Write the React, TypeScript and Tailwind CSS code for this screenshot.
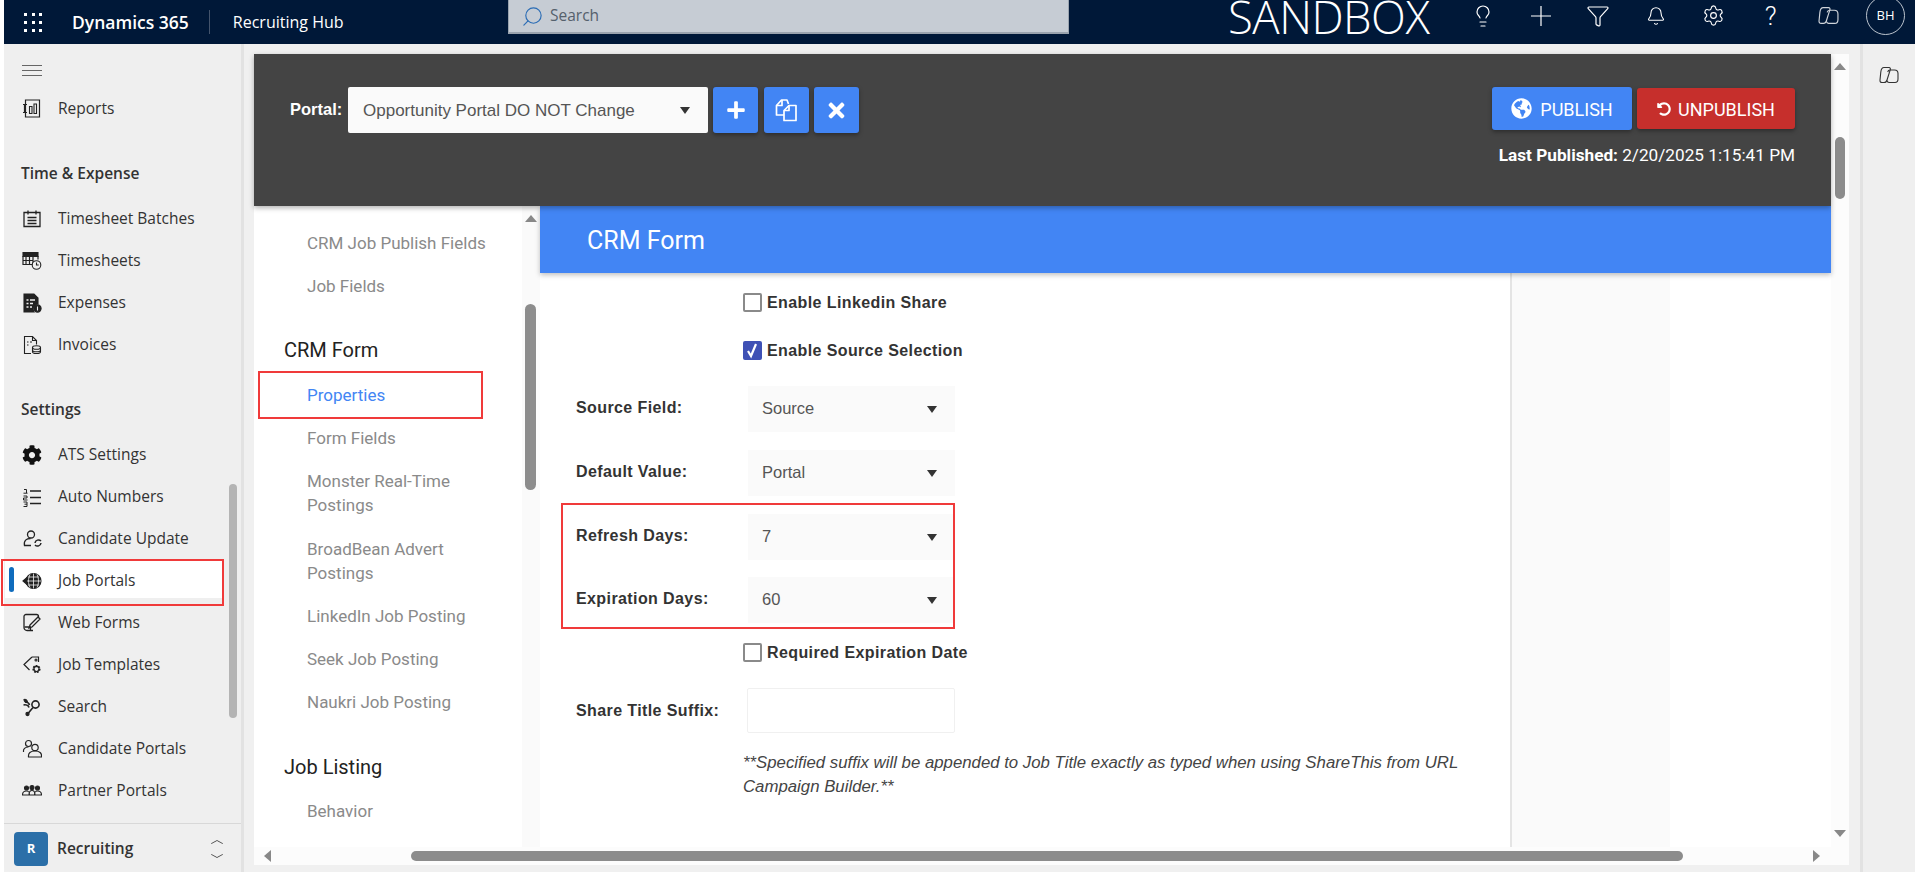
import { Bell, Filter, Lightbulb, Search, Settings, ChevronUp, ChevronDown } from 'lucide-react'
import { FaCog, FaGlobeAmericas, FaPlus, FaTimes, FaUndoAlt } from 'react-icons/fa'
import type { ReactNode } from 'react'

const navFont = "font-['Open_Sans','Noto_Sans',sans-serif]"
const roboto = "font-['Roboto',sans-serif]"
const arial = "font-['Liberation_Sans',Arial,sans-serif]"

const Ico = ({ children }: { children: ReactNode }) => (
    <svg viewBox="0 0 20 20" className="w-5 h-5 shrink-0 text-[#222]" fill="none" stroke="currentColor" strokeWidth="1.1">
        {children}
    </svg>
)

const sideIcons: Record<string, ReactNode> = {
    reports: (
        <Ico>
            <path d="M3.500 1h14v17h-14zM1 5.500h4M1 13.500h4M2.500 5.500v8" strokeWidth="1.200" />
            <path d="M7.500 7.500h2.500v7H7.500zM12 5h2.500v9.500H12z" />
        </Ico>
    ),
    batches: (
        <Ico>
            <path d="M2 3.500h16v14H2zM6 1.500v4M14 1.500v4M5.500 8.500h9M5.500 11.500h9M5.500 14.500h9" strokeWidth="1.300" />
        </Ico>
    ),
    timesheets: (
        <Ico>
            <path d="M1 1.500h15v4H1z" fill="currentColor" />
            <path d="M1 5.500h10v8H1zM4 5.500v8M7.500 5.500v8M1 9.500h10M11 5.500h5v3" strokeWidth="1.200" />
            <circle cx="14.500" cy="14" r="4.300" fill="#f0f0f0" />
            <path d="M14.500 11.500V14h2.200" />
        </Ico>
    ),
    expenses: (
        <Ico>
            <path d="M2 1h10l4 4v6a5 5 0 0 0-4 8H2z" fill="currentColor" />
            <path d="M4.500 7h2M8 7h5M4.500 10.500h2M8 10.500h3M4.500 14h2M8 14h2" stroke="#f0f0f0" strokeWidth="1.300" />
            <circle cx="15.500" cy="15.500" r="3.600" fill="currentColor" />
            <path d="M15.500 13.500v4" stroke="#f0f0f0" />
        </Ico>
    ),
    invoices: (
        <Ico>
            <path d="M9 18.500H2.500v-17h8l4 4v4M10.500 1.500v4h4M5 7h1.500M8 7h2M5 10h1.500" />
            <ellipse cx="14.500" cy="12.500" rx="4" ry="1.800" />
            <path d="M10.500 12.500v4.200c0 1 1.800 1.800 4 1.800s4-.8 4-1.800v-4.200M10.500 15c0 1 1.800 1.800 4 1.800s4-.8 4-1.800" />
        </Ico>
    ),
    candidate: (
        <Ico>
            <circle cx="9" cy="5.500" r="3.500" strokeWidth="1.300" />
            <path d="M9 16.500H2.500c-1-5 2-7 6-7" strokeWidth="1.300" />
            <path d="M13 14a3.500 3.500 0 0 1 6-2M19 14a3.500 3.500 0 0 1-6 2" strokeWidth="1.500" />
        </Ico>
    ),
    portals: (
        <Ico>
            <circle cx="11.500" cy="10" r="7.500" fill="currentColor" />
            <path d="M4 10h15M11.500 2.500v15M6 6h11M6 14h11M8 3.500c-2 4-2 9 0 13M15 3.500c2 4 2 9 0 13" stroke="#f0f0f0" strokeWidth="0.800" />
            <path d="M1 10l3.500-3v6z" fill="currentColor" />
        </Ico>
    ),
    forms: (
        <Ico>
            <path d="M11 17.500H5a3 3 0 0 1-3-3v-11a2 2 0 0 1 2-2h10.500a2 2 0 0 1 2 2V5" strokeWidth="1.300" />
            <path d="M2.500 14h6v3.500M8 12l8-8 2 2-8 8-3 1z" strokeWidth="1.300" />
        </Ico>
    ),
    templates: (
        <Ico>
            <path d="M10 2l-8 7.500 5.500 5.500M10 2h6.500v5" strokeWidth="1.200" />
            <circle cx="14" cy="5" r="1" />
            <circle cx="14.500" cy="14" r="3" strokeWidth="2.200" strokeDasharray="1.600 1" />
            <circle cx="14.500" cy="14" r="2.600" />
        </Ico>
    ),
    search: (
        <Ico>
            <circle cx="13.500" cy="7.500" r="3.600" strokeWidth="1.600" />
            <path d="M11 10.500l-5 6M3 5c2 0 4 1 4.500 3M1.500 8c2.500-.5 5 .5 5.500 2.500" strokeWidth="1.600" />
            <path d="M2 2.500c1.500-.5 3 0 3.500 2.500-2 .5-3.500-.5-3.500-2.500z" fill="currentColor" />
            <circle cx="5.500" cy="17" r="1.600" fill="currentColor" />
        </Ico>
    ),
    candPortals: (
        <Ico>
            <circle cx="6.500" cy="4.500" r="3" strokeWidth="1.200" />
            <path d="M1.500 13c-.5-3 1.500-5 5-5" strokeWidth="1.200" />
            <circle cx="13" cy="8.500" r="3.200" strokeWidth="1.200" />
            <path d="M6.500 18c-.5-4 2-6 6.500-6s7 2 6.500 6z" strokeWidth="1.200" />
        </Ico>
    ),
    partner: (
        <Ico>
            <circle cx="4.500" cy="7" r="2" fill="currentColor" />
            <circle cx="10" cy="6.500" r="2" fill="currentColor" />
            <circle cx="15.500" cy="7" r="2" fill="currentColor" />
            <path d="M.5 14c0-3 1.500-4 4-4s3 .8 3 4zM7 14c0-3 .8-4.500 3-4.500s3 1.500 3 4.500zM12.500 14c0-3 .5-4 3-4s4 1 4 4z" />
        </Ico>
    ),
}

const ListNumbers = () => (
    <Ico>
        <path d="M8 4h11M8 10.500h11M8 16.500h11" strokeWidth="1.300" />
        <path d="M2 2.500h2.500v3.500M1.500 6.200h4M1.500 9h3.500v2h-3.500v2h4M1.500 15h3.500v4.500h-3.500M2.500 17.200h2.500" strokeWidth="1" />
    </Ico>
)

type SideItem = { label: string; icon: ReactNode; active?: boolean }

const timeItems: SideItem[] = [
    { label: 'Timesheet Batches', icon: sideIcons.batches },
    { label: 'Timesheets', icon: sideIcons.timesheets },
    { label: 'Expenses', icon: sideIcons.expenses },
    { label: 'Invoices', icon: sideIcons.invoices },
]

const settingItems: SideItem[] = [
    { label: 'ATS Settings', icon: <FaCog className="w-5 h-5 shrink-0 text-[#111]" /> },
    { label: 'Auto Numbers', icon: <ListNumbers /> },
    { label: 'Candidate Update', icon: sideIcons.candidate },
    { label: 'Job Portals', icon: sideIcons.portals, active: true },
    { label: 'Web Forms', icon: sideIcons.forms },
    { label: 'Job Templates', icon: sideIcons.templates },
    { label: 'Search', icon: sideIcons.search },
    { label: 'Candidate Portals', icon: sideIcons.candPortals },
    { label: 'Partner Portals', icon: sideIcons.partner },
]

const SideRow = ({ item }: { item: SideItem }) => (
    <div className="relative h-[42px] flex items-center">
        {item.active && (
            <>
                <div className="absolute left-px right-[18px] top-[1px] bottom-[4px] bg-white" />
                <div className="absolute left-[5px] top-[7px] w-[5px] h-[25px] rounded bg-[#0f6cbd]" />
            </>
        )}
        <div className="relative flex items-center pl-[18px] gap-[16px] text-[15.500px] text-[#333]">
            {item.icon}
            <span>{item.label}</span>
        </div>
    </div>
)

const SideHeading = ({ children }: { children: ReactNode }) => (
    <div className="h-[68px] pt-[31px] pl-[17px] text-[15.500px] leading-[24px] font-semibold text-[#333]">{children}</div>
)

const Sidebar = () => (
    <aside className={`relative w-[240px] shrink-0 flex flex-col bg-[#efefef] border-r-[3px] border-[#e2e2e2] ${navFont} overflow-hidden rounded-bl-lg`}>
        <div className="flex-1 overflow-hidden">
            <div className="h-[44px] pl-[18px] pt-[21px]">
                <div className="w-[20px] h-[11px] border-y border-[#666] relative">
                    <div className="absolute top-[4px] left-0 right-0 h-px bg-[#666]" />
                </div>
            </div>
            <SideRow item={{ label: 'Reports', icon: sideIcons.reports }} />
            <SideHeading>Time &amp; Expense</SideHeading>
            {timeItems.map(i => <SideRow key={i.label} item={i} />)}
            <SideHeading>Settings</SideHeading>
            {settingItems.map(i => <SideRow key={i.label} item={i} />)}
        </div>
        <div className="h-[49px] shrink-0 border-t border-[#d8d8d8] flex items-center pt-[2px] pl-[10px] pr-[13px] mb-0">
            <div className="w-[34px] h-[34px] rounded bg-[#2b6fa8] flex items-center justify-center text-white text-[13px] font-bold">R</div>
            <span className="ml-[9px] text-[15.500px] font-semibold text-[#333]">Recruiting</span>
            <div className="ml-auto flex flex-col gap-[2px] text-[#444]">
                <ChevronUp className="w-[22px] h-[12px]" strokeWidth={1.100} preserveAspectRatio="none" />
                <ChevronDown className="w-[22px] h-[12px]" strokeWidth={1.100} preserveAspectRatio="none" />
            </div>
        </div>
        {/* sidebar scrollbar */}
        <div className="absolute left-[225px] top-[440px] w-[8px] h-[234px] rounded-full bg-[#b4b4b4]" />
    </aside>
)

const CopilotIcon = ({ className }: { className: string }) => (
    <svg viewBox="0 0 20 20" className={className} fill="none" stroke="currentColor" strokeWidth="1.100" strokeLinejoin="round">
        <path d="M5 2.500h5c1.200 0 1.700 1 1.300 2.200L8 15c-.4 1.500-1.300 2.500-2.800 2.500H3c-1.500 0-2.200-1-2-2.500l.8-8c.3-2.500 1.400-4.500 3.200-4.500z" />
        <path d="M11 5h4.500c2 0 3.500 1.500 3.500 3.500V14c0 2-1.200 3.500-3 3.500h-6c-1 0-1.800-.8-2-1.800" />
        <path d="M11 5c-1.200 0-2 .8-2.300 2" />
    </svg>
)

const HeadCell = ({ children }: { children: ReactNode }) => (
    <div className="w-[57.500px] shrink-0 flex items-center justify-center">{children}</div>
)

const TopBar = () => (
    <header className="h-[44px] shrink-0 bg-[#001838] text-white flex items-center relative overflow-hidden">
        <div className="ml-[20px] grid grid-cols-3 gap-[5px] w-[18px] h-[18px] mt-[-1px]">
            {Array.from({ length: 9 }).map((_, i) => <span key={i} className="w-[3px] h-[3px] bg-white" />)}
        </div>
        <span className={`ml-[30px] text-[17.500px] font-semibold ${navFont}`}>Dynamics 365</span>
        <div className="ml-[20px] w-px h-[24px] bg-[#44546c]" />
        <span className={`ml-[23px] text-[16px] ${navFont}`}>Recruiting Hub</span>
        <div className="absolute left-[504px] top-0 w-[561px] h-[34px] bg-[#c6ccd4] border-b-2 border-x border-[#9aa3ae] flex items-center pl-[12px] gap-[6px] text-[#55606c]">
            <Search className="w-[23px] h-[23px] text-[#2a6cb5] -scale-x-100" strokeWidth={1.200} />
            <span className={`text-[15.500px] ${navFont}`}>Search</span>
        </div>
        <span className={`absolute left-[1224px] top-[-12px] text-[45.500px] leading-[56px] font-light tracking-[-0.5px] ${navFont}`}>SANDBOX</span>
        <div className="ml-auto self-start h-[31px] flex items-center mr-[10px]">
            <HeadCell><Lightbulb className="w-[24px] h-[24px]" strokeWidth={1.200} /></HeadCell>
            <HeadCell>
                <svg viewBox="0 0 20 20" className="w-[20px] h-[20px]" stroke="currentColor" strokeWidth="1.200"><path d="M0 10h20M10 0v20" /></svg>
            </HeadCell>
            <HeadCell><Filter className="w-[24px] h-[24px]" strokeWidth={1.200} /></HeadCell>
            <HeadCell><Bell className="w-[20px] h-[20px]" strokeWidth={1.300} /></HeadCell>
            <HeadCell><Settings className="w-[23px] h-[23px]" strokeWidth={1.200} /></HeadCell>
            <HeadCell><span className={`text-[26px] font-light leading-none ${roboto}`}>?</span></HeadCell>
            <HeadCell><CopilotIcon className="w-[21px] h-[21px] text-[#cfd4da]" /></HeadCell>
            <div className={`ml-[9px] w-[39px] h-[39px] shrink-0 rounded-full border border-[#bcc4ce] flex items-center justify-center text-[13px] ${navFont}`}>BH</div>
        </div>
    </header>
)

const Arrow = ({ className = '' }: { className?: string }) => (
    <span className={`w-0 h-0 border-x-[5px] border-x-transparent border-t-[7px] border-t-[#333] ${className}`} />
)

const BlueBtn = ({ children }: { children: ReactNode }) => (
    <button className="w-[45px] h-[46px] rounded-[3px] bg-[#4285f4] text-white flex items-center justify-center shadow-[0_2px_4px_rgba(0,0,0,0.35)]">
        {children}
    </button>
)

const DarkBar = () => (
    <div className={`relative z-20 h-[152px] bg-[#444] shrink-0 flex shadow-[0_2px_5px_rgba(0,0,0,0.3)] ${roboto}`}>
        <div className="flex items-start pl-[36px] pt-[33px]">
            <span className={`w-[58px] shrink-0 mt-[12px] text-[16.500px] leading-[20px] font-bold text-white ${arial}`}>Portal:</span>
            <div className={`w-[360px] h-[46px] bg-[#fafafa] rounded-[2px] flex items-center pl-[15px] pr-[18px] text-[17px] text-[#555] ${arial}`}>
                <span className="pt-[1px]">Opportunity Portal DO NOT Change</span>
                <Arrow className="ml-auto" />
            </div>
            <div className="flex gap-[5.500px] ml-[5px]">
                <BlueBtn><FaPlus className="w-[20px] h-[20px]" /></BlueBtn>
                <BlueBtn>
                    <svg viewBox="0 0 24 24" className="w-[24px] h-[24px]" fill="none" stroke="currentColor" strokeWidth="1.700" strokeLinejoin="round">
                        <path d="M10 17H2.500V7.500l5-5.500h5.500l1.500 4" />
                        <path d="M8 2v5.500H2.500" />
                        <path d="M15 7.500h7v15H10V12.500z" />
                        <path d="M15 7.500v5h-5" />
                    </svg>
                </BlueBtn>
                <BlueBtn><FaTimes className="w-[23px] h-[23px]" /></BlueBtn>
            </div>
        </div>
        <div className="ml-auto pr-[36px] pt-[33px] flex flex-col items-end">
            <div className="flex items-center gap-[5px]">
                <button className="w-[140px] h-[43px] rounded-[3px] bg-[#4285f4] text-white text-[18px] flex items-center justify-center gap-[8px] shadow-[0_2px_4px_rgba(0,0,0,0.35)]">
                    <FaGlobeAmericas className="w-[21px] h-[21px]" />
                    <span className="pt-[2px]">PUBLISH</span>
                </button>
                <button className="w-[158px] h-[41px] rounded-[3px] bg-[#c62f2c] text-white text-[18px] flex items-center justify-center gap-[7px] shadow-[0_2px_4px_rgba(0,0,0,0.35)]">
                    <FaUndoAlt className="w-[14px] h-[14px]" />
                    <span className="pt-[2px]">UNPUBLISH</span>
                </button>
            </div>
            <div className="mt-[15px] text-[17.200px] leading-[20px] text-white">
                <span className="font-bold">Last Published:</span> 2/20/2025 1:15:41 PM
            </div>
        </div>
    </div>
)

type NavEntry = { kind: 'item' | 'head'; lines: string[]; active?: boolean }

const portalNav: NavEntry[] = [
    { kind: 'item', lines: ['CRM Job Publish Fields'] },
    { kind: 'item', lines: ['Job Fields'] },
    { kind: 'head', lines: ['CRM Form'] },
    { kind: 'item', lines: ['Properties'], active: true },
    { kind: 'item', lines: ['Form Fields'] },
    { kind: 'item', lines: ['Monster Real-Time', 'Postings'] },
    { kind: 'item', lines: ['BroadBean Advert', 'Postings'] },
    { kind: 'item', lines: ['LinkedIn Job Posting'] },
    { kind: 'item', lines: ['Seek Job Posting'] },
    { kind: 'item', lines: ['Naukri Job Posting'] },
    { kind: 'head', lines: ['Job Listing'] },
    { kind: 'item', lines: ['Behavior'] },
]

const PortalNav = () => (
    <div className={`relative w-[286px] shrink-0 h-full overflow-hidden bg-white ${roboto}`}>
        <div className="pt-[15px] pl-[53px] pr-[40px]">
            {portalNav.map(e =>
                e.kind === 'head' ? (
                    <div key={e.lines[0]} className="h-[66px] pt-[31px] -ml-[23px] text-[20px] leading-[24px] text-[#222]">{e.lines[0]}</div>
                ) : (
                    <div key={e.lines[0]} className={`py-[9.600px] text-[17px] leading-[24px] ${e.active ? 'text-[#4285f4]' : 'text-[#8a8a8a]'}`}>
                        {e.lines.map(l => <div key={l} className="whitespace-nowrap">{l}</div>)}
                    </div>
                )
            )}
        </div>
        {/* nav scroll track */}
        <div className="absolute right-0 top-0 bottom-0 w-[18px] bg-[#fafafa]">
            <span className="absolute left-[3px] top-[9px] w-0 h-0 border-x-[6px] border-x-transparent border-b-[7px] border-b-[#888]" />
            <div className="absolute left-[3px] top-[98px] w-[11px] h-[186px] rounded-full bg-[#8c8c8c]" />
        </div>
    </div>
)

const Check = ({ label, checked }: { label: string; checked?: boolean }) => (
    <div className="flex items-center ml-[203px] h-[19px]">
        {checked ? (
            <span className="w-[19px] h-[19px] rounded-[2px] bg-[#3f51b5] flex items-center justify-center">
                <svg viewBox="0 0 19 19" className="w-[19px] h-[19px]" fill="none" stroke="white" strokeWidth="2.200"><path d="M5 10l3 5 5-12" /></svg>
            </span>
        ) : (
            <span className="w-[19px] h-[19px] rounded-[2px] border-2 border-[#8a8a8a] bg-white" />
        )}
        <span className="ml-[5px] text-[16px] font-bold text-[#333] tracking-[0.4px]">{label}</span>
    </div>
)

const SelectRow = ({ label, value, className = '' }: { label: string; value: string; className?: string }) => (
    <div className={`flex items-center h-[46px] pl-[36px] ${className}`}>
        <span className="w-[172px] shrink-0 pb-[2px] text-[16px] font-bold text-[#333] tracking-[0.4px]">{label}</span>
        <div className="w-[207px] h-full bg-[#fafafa] flex items-center pl-[14px] pr-[18px] text-[16.500px] text-[#555]">
            <span className="pb-[2px]">{value}</span>
            <Arrow className="ml-auto" />
        </div>
    </div>
)

const FormBody = () => (
    <div className={`flex flex-1 min-h-0 ${arial}`}>
        <div className="w-[972px] shrink-0 border-r-2 border-[#e4e4e4] bg-white pt-[20px] overflow-hidden">
            <Check label="Enable Linkedin Share" />
            <div className="mt-[29px]"><Check label="Enable Source Selection" checked /></div>
            <SelectRow className="mt-[26px]" label="Source Field:" value="Source" />
            <SelectRow className="mt-[18px]" label="Default Value:" value="Portal" />
            <SelectRow className="mt-[18px]" label="Refresh Days:" value="7" />
            <SelectRow className="mt-[17px]" label="Expiration Days:" value="60" />
            <div className="mt-[20px]"><Check label="Required Expiration Date" /></div>
            <div className="mt-[26px] flex items-center h-[45px] pl-[36px]">
                <span className="w-[171px] shrink-0 text-[16px] font-bold text-[#333] tracking-[0.4px]">Share Title Suffix:</span>
                <div className="w-[208px] h-full border border-[#f0f0f0] rounded-[2px] bg-white" />
            </div>
            <p className="mt-[18px] ml-[203px] w-[760px] text-[16.800px] leading-[24px] italic text-[#444]">
                **Specified suffix will be appended to Job Title exactly as typed when using ShareThis from URL<br />Campaign Builder.**
            </p>
        </div>
        <div className="w-[158px] shrink-0 bg-[#fafafa]" />
        <div className="flex-1 bg-white" />
    </div>
)

const MainCard = () => (
    <div className="w-[1595px] h-[811px] flex flex-col bg-white">
        <div className="flex flex-1 min-h-0">
            <div className="w-[1577px] flex flex-col">
                <DarkBar />
                <div className="flex flex-1 min-h-0">
                    <PortalNav />
                    <div className="flex-1 flex flex-col min-w-0">
                        <div className={`relative z-10 h-[67px] shrink-0 bg-[#4285f4] text-white text-[25px] pl-[47px] pt-[2px] flex items-center shadow-[0_2px_5px_rgba(0,0,0,0.25)] ${roboto}`}>
                            CRM Form
                        </div>
                        <FormBody />
                    </div>
                </div>
            </div>
            {/* page vertical scrollbar */}
            <div className="relative w-[18px] bg-[#fcfcfc]">
                <span className="absolute left-[3px] top-[9px] w-0 h-0 border-x-[6px] border-x-transparent border-b-[7px] border-b-[#888]" />
                <div className="absolute left-[4px] top-[83px] w-[10px] h-[62px] rounded-full bg-[#8c8c8c]" />
                <span className="absolute left-[3px] bottom-[10px] w-0 h-0 border-x-[6px] border-x-transparent border-t-[7px] border-t-[#888]" />
            </div>
        </div>
        {/* page horizontal scrollbar */}
        <div className="relative h-[18px] shrink-0 bg-[#fcfcfc]">
            <span className="absolute left-[10px] top-[3px] w-0 h-0 border-y-[6px] border-y-transparent border-r-[7px] border-r-[#888]" />
            <div className="absolute left-[157px] top-[4px] w-[1272px] h-[10px] rounded-full bg-[#8c8c8c]" />
            <span className="absolute left-[1559px] top-[3px] w-0 h-0 border-y-[6px] border-y-transparent border-l-[7px] border-l-[#888]" />
        </div>
    </div>
)

const Annotations = () => (
    <>
        <div className="absolute left-px top-[559px] w-[223px] h-[47px] border-2 border-[#f03a3a]" />
        <div className="absolute left-[258px] top-[371px] w-[225px] h-[48px] border-2 border-[#f03a3a]" />
        <div className="absolute left-[561px] top-[503px] w-[394px] h-[126px] border-2 border-[#f03a3a]" />
    </>
)

export default function App() {
    return (
        <div className={`relative w-[1920px] h-[872px] overflow-hidden bg-white pl-[4px] pr-[5px] ${arial}`}>
            <div className="h-full flex flex-col">
                <TopBar />
                <div className="flex flex-1 min-h-0 bg-[#f0f0f0]">
                    <Sidebar />
                    <main className="flex-1 pl-[10px] pt-[10px] min-w-0">
                        <MainCard />
                    </main>
                    <div className="w-[55px] shrink-0 border-l-[3px] border-[#e2e2e2] bg-[#efefef] flex justify-center pt-[21px]">
                        <CopilotIcon className="w-[20px] h-[20px] text-[#333]" />
                    </div>
                </div>
            </div>
            <Annotations />
        </div>
    )
}
